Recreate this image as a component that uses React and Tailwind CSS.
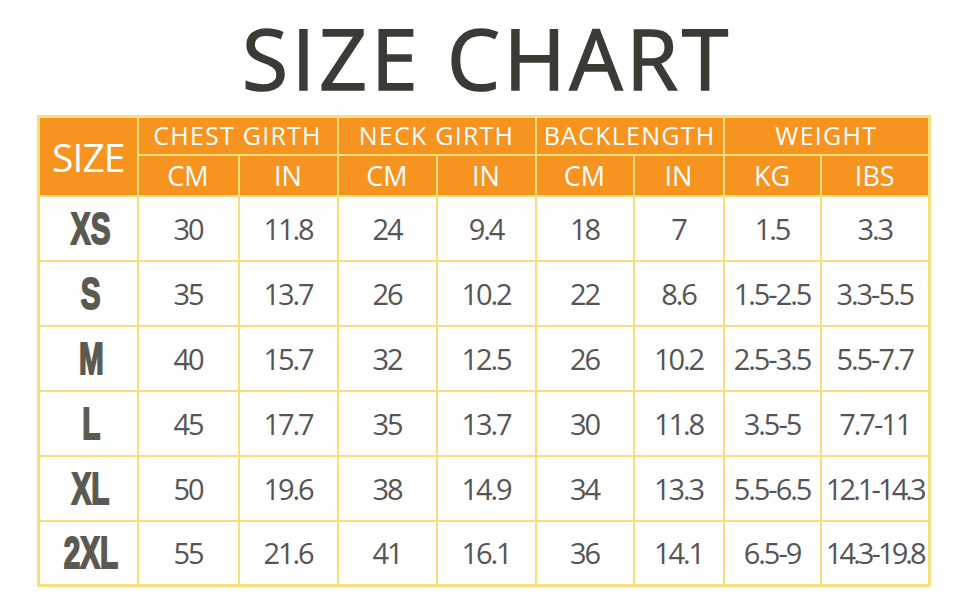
const sizes = [
  { size: "XS", vals: ["30", "11.8", "24", "9.4", "18", "7", "1.5", "3.3"] },
  { size: "S", vals: ["35", "13.7", "26", "10.2", "22", "8.6", "1.5-2.5", "3.3-5.5"] },
  { size: "M", vals: ["40", "15.7", "32", "12.5", "26", "10.2", "2.5-3.5", "5.5-7.7"] },
  { size: "L", vals: ["45", "17.7", "35", "13.7", "30", "11.8", "3.5-5", "7.7-11"] },
  { size: "XL", vals: ["50", "19.6", "38", "14.9", "34", "13.3", "5.5-6.5", "12.1-14.3"] },
  { size: "2XL", vals: ["55", "21.6", "41", "16.1", "36", "14.1", "6.5-9", "14.3-19.8"] },
];

const colWidths = [99, 101, 99, 99, 99, 98, 90, 97, 109];

const App = () => {
  return (
    <div className="w-[970px] h-[600px] bg-white overflow-hidden font-['Open_Sans',sans-serif]">
      {/* titulo */}
      <h1 className="pt-[16px] pl-[4px] text-center text-[84px] font-normal leading-none tracking-[0.045em] text-[#3b3b36] [-webkit-text-stroke:1.5px_#3b3b36]">
        SIZE CHART
      </h1>

      {/* tabla */}
      <table className="ml-[37px] mt-[15px] w-[892px] table-fixed border-collapse border-[3px] border-[#f5e07c]">
        <colgroup>
          {colWidths.map((w, i) => (
            <col key={i} style={{ width: w }} />
          ))}
        </colgroup>
        <thead className="bg-[#f7941f] text-white">
          <tr className="h-[38px]">
            <th
              rowSpan={2}
              className="border-2 border-[#f5e07c] font-normal text-[39px] leading-none tracking-tight"
            >
              SIZE
            </th>
            <th colSpan={2} className="border-2 border-[#f5e07c] font-normal text-[25px] leading-none tracking-[0.05em]">
              CHEST GIRTH
            </th>
            <th colSpan={2} className="border-2 border-[#f5e07c] font-normal text-[25px] leading-none tracking-[0.05em]">
              NECK GIRTH
            </th>
            <th colSpan={2} className="border-2 border-[#f5e07c] font-normal text-[25px] leading-none tracking-[0.05em]">
              BACKLENGTH
            </th>
            <th colSpan={2} className="border-2 border-[#f5e07c] font-normal text-[25px] leading-none tracking-[0.05em]">
              WEIGHT
            </th>
          </tr>
          <tr className="h-[41px]">
            {["CM", "IN", "CM", "IN", "CM", "IN", "KG", "IBS"].map((u, i) => (
              <th key={i} className="border-2 border-[#f5e07c] font-normal text-[27px] leading-none">
                {u}
              </th>
            ))}
          </tr>
        </thead>
        <tbody>
          {sizes.map((row) => (
            <tr key={row.size} className="h-[65px]">
              <td className="border-2 border-[#f5e07c] text-center">
                <span className="inline-block pl-2 scale-x-[0.66] font-['Liberation_Sans',sans-serif] font-bold text-[45px] leading-none text-[#5b5a52] [-webkit-text-stroke:2px_#5b5a52]">
                  {row.size}
                </span>
              </td>
              {row.vals.map((v, i) => (
                <td
                  key={i}
                  className={`border-2 border-[#f5e07c] px-0 whitespace-nowrap text-center text-[29px] leading-none text-[#555555] ${
                    v.length > 7 ? "tracking-[-0.1em]" : "tracking-[-0.07em]"
                  }`}
                >
                  {v}
                </td>
              ))}
            </tr>
          ))}
        </tbody>
      </table>
    </div>
  );
};

export default App;
